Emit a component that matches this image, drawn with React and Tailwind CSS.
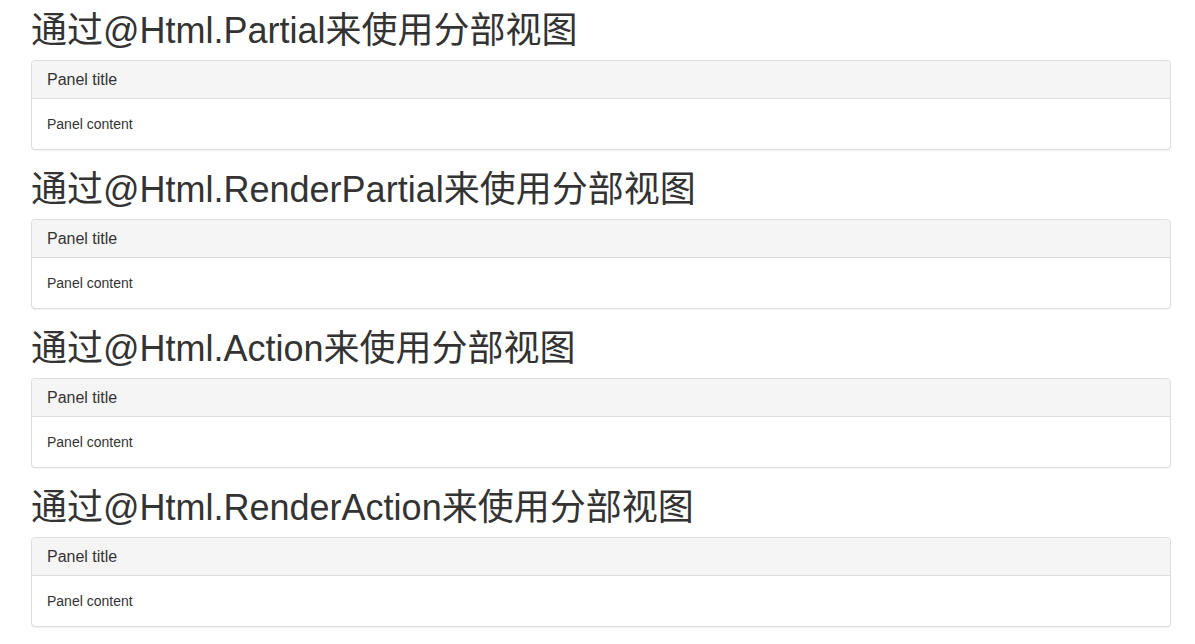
import React from 'react';

const sections = [
  '通过@Html.Partial来使用分部视图',
  '通过@Html.RenderPartial来使用分部视图',
  '通过@Html.Action来使用分部视图',
  '通过@Html.RenderAction来使用分部视图',
];

const Panel = () => (
  <div className="mb-5 rounded border border-[#ddd] bg-white shadow-[0_1px_1px_rgba(0,0,0,0.05)]">
    <div className="rounded-t border-b border-[#ddd] bg-[#f5f5f5] px-[15px] py-[10px] text-[16px] leading-[17px] text-[#333]">
      Panel title
    </div>
    <div className="p-[15px] text-[14px] leading-[20px] text-[#333]">Panel content</div>
  </div>
);

export default function App() {
  return (
    <div
      className="min-h-screen bg-white px-[31px] pt-[11px] text-[#333]"
      style={{ fontFamily: '"Liberation Sans", Arial, "Noto Sans CJK SC", sans-serif' }}
    >
      <div className="w-[1140px]">
        {sections.map((title, i) => (
          <div key={i}>
            <h1 className="mb-[10px] text-[36px] font-normal leading-[39px]">{title}</h1>
            <Panel />
          </div>
        ))}
      </div>
    </div>
  );
}
